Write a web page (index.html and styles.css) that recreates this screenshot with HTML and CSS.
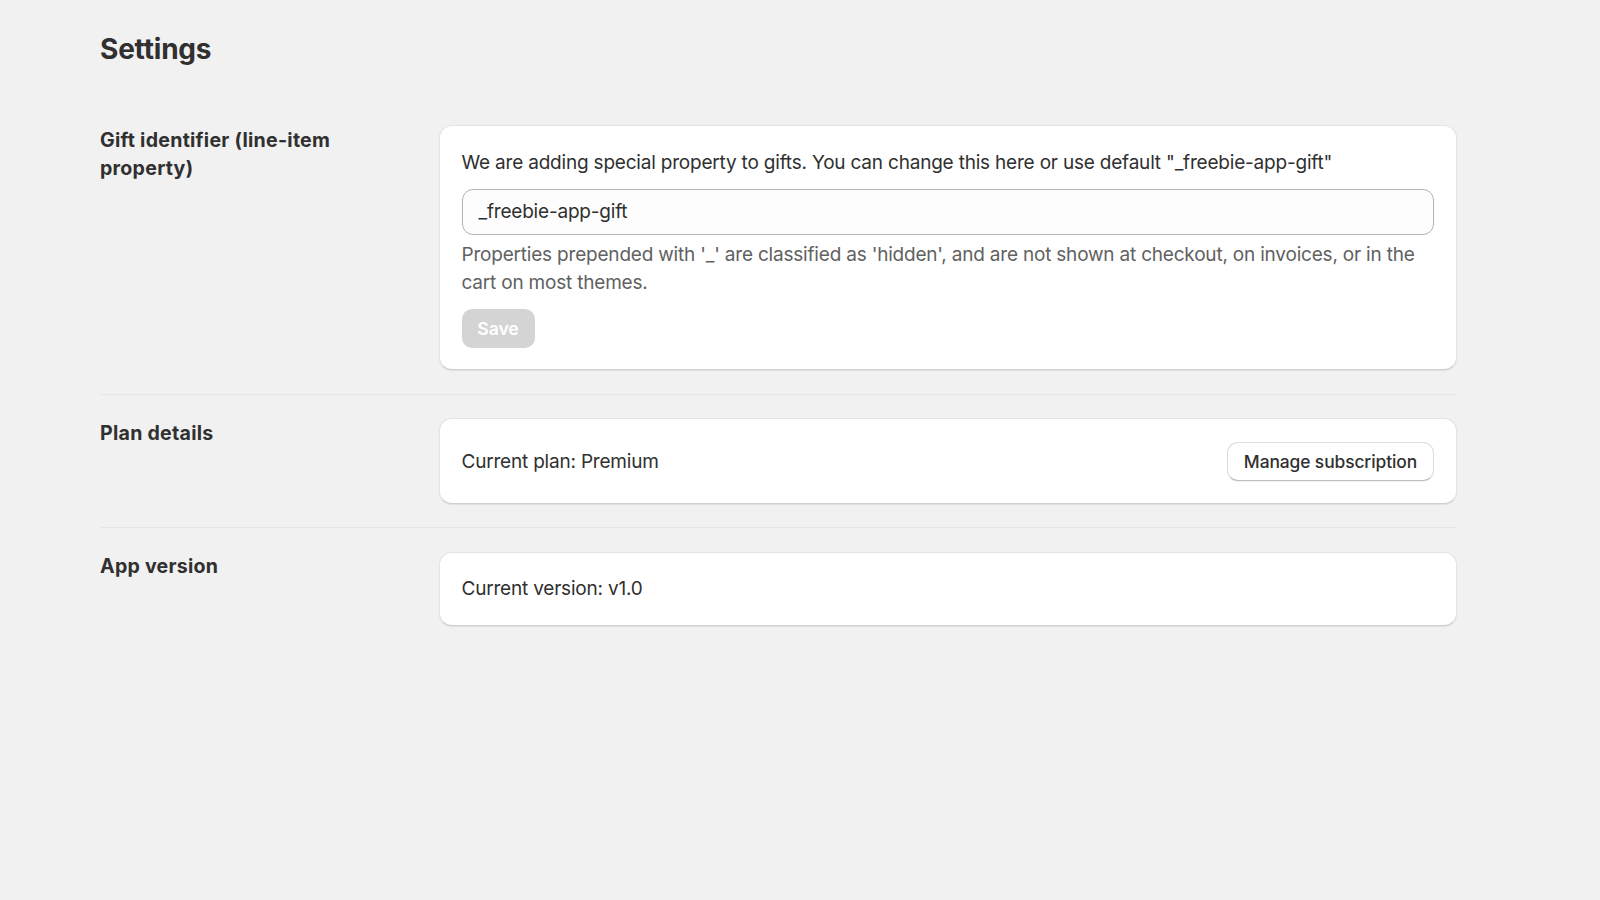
FILE: index.html
```html
<!DOCTYPE html>
<html lang="en">
<head>
<meta charset="utf-8">
<title>Settings</title>
<link rel="stylesheet" href="styles.css">
</head>
<body>
<div class="page">
  <h1 class="page-title">Settings</h1>
  <div class="sections">
    <section class="section">
      <div class="annotation">Gift identifier (line-item property)</div>
      <div class="card card-gift">
        <p class="text">We are adding special property to gifts. You can change this here or use default "_freebie-app-gift"</p>
        <div class="input">_freebie-app-gift</div>
        <p class="help">Properties prepended with '_' are classified as 'hidden', and are not shown at checkout, on invoices, or in the cart on most themes.</p>
        <div class="actions"><button class="btn-save" type="button">Save</button></div>
      </div>
    </section>
    <section class="section">
      <div class="annotation">Plan details</div>
      <div class="card card-row">
        <span class="text">Current plan: Premium</span>
        <button class="btn-secondary" type="button">Manage subscription</button>
      </div>
    </section>
    <section class="section">
      <div class="annotation">App version</div>
      <div class="card">
        <span class="text">Current version: v1.0</span>
      </div>
    </section>
  </div>
</div>
</body>
</html>
```

FILE: styles.css
```css
* { box-sizing: border-box; }
html, body { margin: 0; padding: 0; }
body {
  background: #f1f1f1;
  color: #303030;
  font-family: Inter, "Noto Sans", "Liberation Sans", sans-serif;
  font-size: 19px;
  letter-spacing: -0.2px;
  line-height: 28px;
  -webkit-font-smoothing: antialiased;
}
.page {
  width: 1357px;
  margin-left: 100px;
  padding-top: 31px;
}
.page-title {
  margin: 0 0 34px 0;
  font-size: 28px;
  line-height: 36px;
  font-weight: 700;
  letter-spacing: -0.2px;
  color: #303030;
}
.section {
  display: grid;
  grid-template-columns: 312px 1fr;
  column-gap: 26.5px;
  padding: 23.5px 0;
  border-top: 1px solid #e6e6e6;
}
.section:first-child { border-top: none; padding-top: 24px; }
.annotation {
  font-size: 19.6px;
  font-weight: 700;
  letter-spacing: 0.25px;
  padding-top: 0.5px;
  color: #303030;
}
.card {
  background: #ffffff;
  border-radius: 13px;
  padding: 22.75px 22px 21.5px 22px;
  border: 1px solid #e3e3e3;
  border-bottom-color: #cfcfcf;
  box-shadow: 0 1px 1px rgba(0,0,0,0.08);
}
.card-row {
  display: flex;
  align-items: center;
  justify-content: space-between;
}
.text { margin: 0; }
.card-gift .text { margin-bottom: 12px; }
.input {
  height: 46px;
  border: 1px solid #b5b5b5;
  border-radius: 11px;
  background: #fdfdfd;
  padding: 1px 16px 0 16px;
  display: flex;
  align-items: center;
  color: #303030;
}
.help {
  margin: 6px 0 0 0;
  color: #616161;
}
.actions {
  margin-top: 12px;
  display: flex;
}
.btn-save {
  font-family: inherit;
  font-size: 17.6px;
  letter-spacing: -0.1px;
  font-weight: 600;
  color: #ffffff;
  background: #d4d4d4;
  border: none;
  border-radius: 10px;
  height: 39px;
  width: 73px;
  padding: 0;
}
.btn-secondary {
  font-family: inherit;
  font-size: 17.4px;
  letter-spacing: -0.1px;
  font-weight: 500;
  color: #303030;
  background: #ffffff;
  border: 1px solid #dcdcdc;
  border-bottom-color: #bdbdbd;
  border-radius: 11px;
  height: 39px;
  padding: 0 16px;
  box-shadow: 0 1px 0 rgba(0,0,0,0.05);
}
```
